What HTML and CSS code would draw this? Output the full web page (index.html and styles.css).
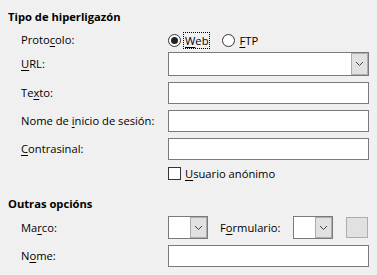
FILE: index.html
```html
<!DOCTYPE html>
<html>
<head>
<meta charset="utf-8">
<link rel="stylesheet" href="styles.css">
</head>
<body>
<div class="dialog">
  <div class="heading">Tipo de hiperligazón</div>
  <div class="form">
    <div class="label plabel">Proto<u>c</u>olo:</div>
    <div class="radios proto">
      <span class="radio checked"></span><span class="rlabel focus"><u>W</u>eb</span>
      <span class="radio"></span><span class="rlabel"><u>F</u>TP</span>
    </div>
    <div class="label"><u>U</u>RL:</div>
    <div class="combo url"><span class="cbox"></span><span class="cbtn"><svg width="9" height="6" viewBox="0 0 9 6"><path d="M1 1 L4.5 4.5 L8 1" fill="none" stroke="#444" stroke-width="1"/></svg></span></div>
    <div class="label">Te<u>x</u>to:</div>
    <div class="input"></div>
    <div class="label">Nome de <u>i</u>nicio de sesión:</div>
    <div class="input"></div>
    <div class="label"><u>C</u>ontrasinal:</div>
    <div class="input"></div>
    <div class="label"></div>
    <div class="check"><span class="cb"></span><span><u>U</u>suario anónimo</span></div>
  </div>
  <div class="heading h2">Outras opcións</div>
  <div class="form form2">
    <div class="label">Ma<u>r</u>co:</div>
    <div class="row">
      <div class="combo small"><span class="cbox"></span><span class="cbtn"><svg width="9" height="6" viewBox="0 0 9 6"><path d="M1 1 L4.5 4.5 L8 1" fill="none" stroke="#444" stroke-width="1"/></svg></span></div>
      <span class="flabel">F<u>o</u>rmulario:</span>
      <div class="combo small"><span class="cbox"></span><span class="cbtn"><svg width="9" height="6" viewBox="0 0 9 6"><path d="M1 1 L4.5 4.5 L8 1" fill="none" stroke="#444" stroke-width="1"/></svg></span></div>
      <span class="disbtn"></span>
    </div>
    <div class="label">N<u>o</u>me:</div>
    <div class="input"></div>
  </div>
</div>
</body>
</html>
```
FILE: styles.css
```css
html, body {
  margin: 0;
  padding: 0;
  background: #f0f0f0;
}
body {
  font-family: "Open Sans", "Noto Sans", sans-serif;
  font-size: 11.2px;
  color: #000;
  width: 377px;
  height: 275px;
  overflow: hidden;
}
u {
  text-decoration: underline;
  text-underline-offset: 2px;
}
.dialog {
  padding: 9px 0 0 8px;
}
.heading {
  font-weight: bold;
  line-height: 16px;
  height: 16px;
}
.h2 {
  margin-top: 15px;
}
.form {
  display: grid;
  grid-template-columns: 147px 201px;
  grid-template-rows: 19px 24px 22px 22px 22px 15px;
  row-gap: 6px;
  margin-left: 13px;
  margin-top: 2px;
  align-items: center;
}
.form .proto {
  margin-top: 4px;
  margin-bottom: -4px;
}
.form .plabel {
  margin-top: 3px;
  margin-bottom: -3px;
}
.form2 {
  grid-template-rows: 23px 22px;
  margin-top: 4px;
}
.label {
  line-height: 16px;
  color: #000;
}
.radios {
  display: flex;
  align-items: center;
  height: 19px;
}
.radio {
  width: 11px;
  height: 11px;
  border: 1px solid #333;
  border-radius: 50%;
  background: #fff;
  position: relative;
  margin-right: 3px;
}
.radio.checked::after {
  content: "";
  position: absolute;
  left: 2px;
  top: 2px;
  width: 7px;
  height: 7px;
  border-radius: 50%;
  background: #222;
}
.rlabel {
  margin-right: 13px;
  line-height: 15px;
  padding: 0 1px;
}
.focus {
  outline: 1px dotted #000;
}
.input {
  height: 22px;
  box-sizing: border-box;
  border: 1px solid #7a7a7a;
  background: #fff;
}
.combo {
  display: flex;
  box-sizing: border-box;
  border: 1px solid #7a7a7a;
  background: #fff;
  height: 24px;
}
.combo .cbox {
  flex: 1;
}
.combo .cbtn {
  width: 17px;
  box-sizing: border-box;
  background: #e1e1e1;
  border: 1px solid #adadad;
  display: flex;
  align-items: center;
  justify-content: center;
}
.combo.small {
  width: 40px;
  height: 23px;
}
.row {
  display: flex;
  align-items: center;
}
.flabel {
  margin-left: 12px;
  width: 73px;
}
.disbtn {
  width: 22px;
  height: 21px;
  box-sizing: border-box;
  border: 1px solid #adadad;
  background: #e1e1e1;
  margin-left: 13px;
}
.check {
  display: flex;
  align-items: center;
}
.cb {
  width: 11px;
  height: 11px;
  border: 1px solid #333;
  background: #fff;
  margin-right: 4px;
}
```
